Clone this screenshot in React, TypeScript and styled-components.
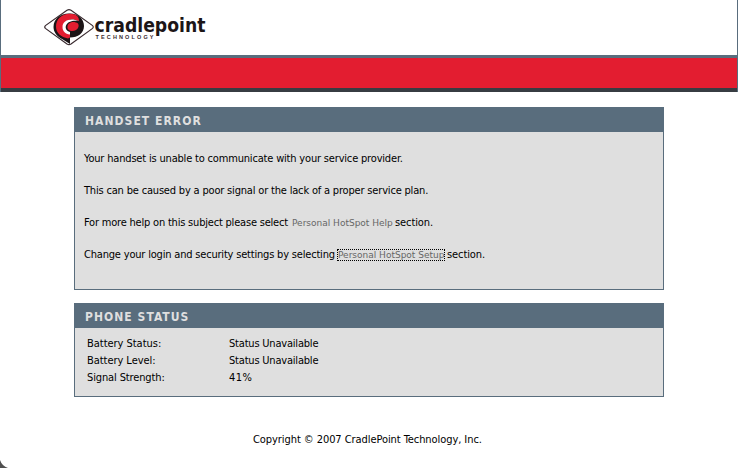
import React from "react";
import styled, { createGlobalStyle } from "styled-components";

const slate = "#596d7d";

const GlobalStyle = createGlobalStyle`
  * { box-sizing: border-box; }
  body {
    margin: 0;
    background: #fff;
    color: #000;
    font: 11px/16px "DejaVu Sans Condensed", "DejaVu Sans", sans-serif;
    font-stretch: condensed;
  }
`;

const Page = styled.div`
  position: relative;
  display: flex;
  flex-direction: column;
  width: 738px;
  height: 468px;
  overflow: hidden;
`;

const Header = styled.header`
  height: 92px;
  border: solid ${slate};
  border-width: 0 1px;
`;

const LogoBar = styled.div`
  height: 55px;
  padding-left: 39px;
`;

const RedBar = styled.div`
  height: 37px;
  background: #e31d30;
  border-top: 3px solid ${slate};
  border-bottom: 4px solid #373c42;
`;

const Content = styled.main`
  display: flex;
  flex-direction: column;
  gap: 13px;
  width: 590px;
  margin: 15px 0 0 74px;
`;

const Panel = styled.section<{ $height: number }>`
  height: ${(p) => p.$height}px;
  border: 1px solid ${slate};
  background: #dfdfdf;
`;

const PanelTitle = styled.h2<{ $spacing: number }>`
  height: 24px;
  margin: 0;
  padding-left: 10px;
  background: ${slate};
  color: #dfdfdf;
  font: bold 12px/26px "DejaVu Sans Condensed", "DejaVu Sans", sans-serif;
  font-stretch: condensed;
  letter-spacing: ${(p) => p.$spacing}px;
`;

const Messages = styled.div`
  display: flex;
  flex-direction: column;
  gap: 16px;
  padding: 19px 0 0 9px;
`;

const Message = styled.p`
  display: flex;
  height: 16px;
  margin: 0;
  white-space: nowrap;
`;

const Run = styled.span<{ $spacing?: number; $width?: number }>`
  flex: none;
  width: ${(p) => (p.$width ? `${p.$width}px` : "auto")};
  letter-spacing: ${(p) => p.$spacing ?? 0}px;
`;

const Link = styled.a<{ $width: number; $spacing: number; $focused?: boolean }>`
  flex: none;
  width: ${(p) => p.$width}px;
  height: 12px;
  margin: 2px 2px 0 0;
  padding-left: ${(p) => (p.$focused ? 1 : 0)}px;
  color: #666;
  font: 9px/13px "DejaVu Sans", sans-serif;
  letter-spacing: ${(p) => p.$spacing}px;
  text-decoration: none;
  outline: ${(p) => (p.$focused ? "1px dotted #000" : "none")};
  outline-offset: -1px;
`;

const StatusTable = styled.dl`
  display: grid;
  grid-template-columns: 142px 1fr;
  grid-auto-rows: 17px;
  margin: 0;
  padding: 7px 0 0 12px;
  line-height: 17px;
`;

const Label = styled.dt<{ $spacing: number }>`
  letter-spacing: ${(p) => p.$spacing}px;
`;

const Value = styled.dd<{ $spacing: number }>`
  margin: 0;
  letter-spacing: ${(p) => p.$spacing}px;
`;

const Footer = styled.footer`
  margin: 35px 0 0 253px;
  letter-spacing: -0.07px;
`;

const Corner = styled.svg`
  position: absolute;
  left: 0;
  bottom: 0;
`;

const Logo = () => (
  <svg width="180" height="50" viewBox="40 0 180 50" aria-label="cradlepoint technology">
    <path d="M67 10.2Q69 9 71 10.2L92.6 25.6Q94 27 92.6 28.4L71 44Q69 45.2 67 44L45.4 28.4Q44 27 45.4 25.6Z" fill="#fff" stroke="#3a2b30" strokeWidth="1.2" />
    <path d="M69 13.500C78 13 84 19 84 26C84 33 78 37.500 70 37.500V44L62 39C57 36.500 53.500 32 53.500 27C53.500 19 60 13.500 69 13.500Z" fill="#1c1517" />
    <path d="M75 14.500C64 11.500 56 18 56 26.500C56 33 61 37 68 38.500L70 37.500V34C65 33.500 62.500 30 63 26C64 20 72 17.500 79 21C79 18 78 16 75 14.500Z" fill="#e31d30" />
    <path d="M79 21C71 17.500 62.500 20 62.500 27C62.500 31 65 34 70 34.500V32C66.500 31 65 28.500 66 25.500C67.500 21.500 73 20 79 21Z" fill="#fff" />
    <path d="M67.500 26.500C68 22 74 20.500 78 23.500C80 26.500 77 31 72.500 31C69 31 67 29 67.500 26.500Z" fill="#e31d30" />
    <text x="94.500" y="32" textLength="111" lengthAdjust="spacingAndGlyphs" fill="#1c1517" fontFamily="DejaVu Sans" fontWeight="bold" fontSize="20">cradlepoint</text>
    <text x="95.500" y="39.300" textLength="58" fill="#3a2b30" fontFamily="Liberation Sans" fontWeight="bold" fontSize="5.500">TECHNOLOGY</text>
  </svg>
);

export default function App() {
  return (
    <Page>
      <GlobalStyle />
      <Header>
        <LogoBar><Logo /></LogoBar>
        <RedBar />
      </Header>
      <Content>
        <Panel $height={183}>
          <PanelTitle $spacing={1.05}>HANDSET ERROR</PanelTitle>
          <Messages>
            <Message><Run $spacing={-0.18}>Your handset is unable to communicate with your service provider.</Run></Message>
            <Message><Run $spacing={-0.18}>This can be caused by a poor signal or the lack of a proper service plan.</Run></Message>
            <Message>
              <Run $width={208} $spacing={-0.2}>For more help on this subject please select</Run>
              <Link $width={101} $spacing={0}>Personal HotSpot Help</Link>
              <Run $spacing={-0.1}>section.</Run>
            </Message>
            <Message>
              <Run $width={253} $spacing={-0.19}>Change your login and security settings by selecting</Run>
              <Link $width={108} $spacing={0} $focused>Personal HotSpot Setup</Link>
              <Run $spacing={-0.1}>section.</Run>
            </Message>
          </Messages>
        </Panel>
        <Panel $height={94}>
          <PanelTitle $spacing={1.05}>PHONE STATUS</PanelTitle>
          <StatusTable>
            <Label $spacing={-0.03}>Battery Status:</Label>
            <Value $spacing={-0.2}>Status Unavailable</Value>
            <Label $spacing={-0.05}>Battery Level:</Label>
            <Value $spacing={-0.2}>Status Unavailable</Value>
            <Label $spacing={-0.13}>Signal Strength:</Label>
            <Value $spacing={0.5}>41%</Value>
          </StatusTable>
        </Panel>
      </Content>
      <Footer>Copyright © 2007 CradlePoint Technology, Inc.</Footer>
      <Corner width="8" height="8" viewBox="0 0 8 8"><path d="M0 0Q2 6 8 8H0Z" fill="#505050" /></Corner>
    </Page>
  );
}
